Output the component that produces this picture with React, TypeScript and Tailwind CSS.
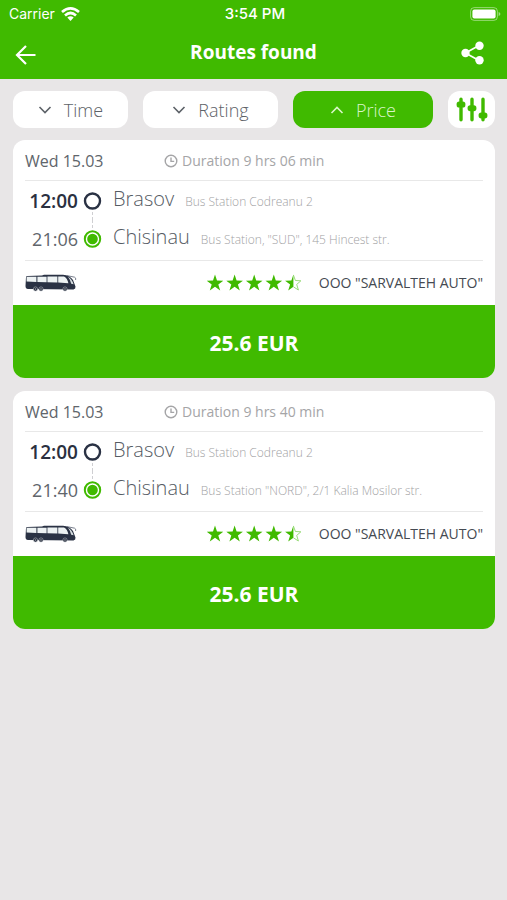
import React from "react";

type Stop = { time: string; city: string; station: string };
type Route = {
  id: number;
  date: string;
  duration: string;
  from: Stop;
  to: Stop;
  carrier: string;
  price: string;
};

const routes: Route[] = [
  {
    id: 1,
    date: "Wed 15.03",
    duration: "Duration 9 hrs 06 min",
    from: { time: "12:00", city: "Brasov", station: "Bus Station Codreanu 2" },
    to: { time: "21:06", city: "Chisinau", station: 'Bus Station, "SUD", 145 Hincest str.' },
    carrier: 'OOO "SARVALTEH AUTO"',
    price: "25.6 EUR",
  },
  {
    id: 2,
    date: "Wed 15.03",
    duration: "Duration 9 hrs 40 min",
    from: { time: "12:00", city: "Brasov", station: "Bus Station Codreanu 2" },
    to: { time: "21:40", city: "Chisinau", station: 'Bus Station "NORD", 2/1 Kalia Mosilor str.' },
    carrier: 'OOO "SARVALTEH AUTO"',
    price: "25.6 EUR",
  },
];

const STAR = "M9 0.6 L11 6.5 L17.3 6.7 L12.3 10.4 L14.2 16.4 L9 12.8 L3.8 16.4 L5.7 10.4 L0.7 6.7 L7 6.5 Z";

function Chevron({ up = false }: { up?: boolean }) {
  return (
    <svg width="14" height="10" viewBox="0 0 14 10" fill="none" stroke="currentColor" strokeWidth="1.6" aria-hidden="true">
      <path d={up ? "M1.5 8 L7 2.5 L12.5 8" : "M1.5 2 L7 7.5 L12.5 2"} />
    </svg>
  );
}

function Stars() {
  return (
    <svg width="97" height="18" viewBox="0 0 97 18" role="img" aria-label="4.5 out of 5">
      {[0, 1, 2, 3].map((i) => (
        <path key={i} d={STAR} fill="#40ba00" transform={`translate(${i * 19.6} 0)`} />
      ))}
      <g transform="translate(78.4 0)">
        <path d="M9 0.6 L7 6.5 L0.7 6.7 L5.7 10.4 L3.8 16.4 L9 12.8 Z" fill="#40ba00" />
        <path d="M9 1 L11 6.5 L16.5 6.8 L12.3 10.4 L14 16 L9 12.8" fill="none" stroke="#8fd86c" strokeWidth="0.9" />
      </g>
    </svg>
  );
}

function Bus() {
  return (
    <svg width="52" height="18" viewBox="0 0 52 18" role="img" aria-label="Bus">
      <path d="M1 3 Q1 2 2.5 2 L17 1.6 L19 0.8 L38 0.8 Q45 1.4 48 6 L50.5 12.5 Q50.8 15 48.5 15.4 L3 15 Q0.5 15 0.5 12 Z" fill="#2a3244" />
      <path d="M1.6 2.8 H11.4 V8 L1.6 7.6 Z M12.4 2.8 H21.6 V8.2 L12.4 8 Z M22.4 2.4 H32.4 V8.4 L22.4 8.2 Z M33.2 2.4 H39 Q42.4 4 43.4 9.2 L33.2 8.6 Z" fill="#edf2f3" />
      <path d="M43 2.8 Q47 5.2 48.6 10.2 L46.2 9.8 Q45.4 6 43 2.8 Z" fill="#d5dcdf" />
      <path d="M42 1.6 L49.6 3.2 Q51.2 3.6 50.6 6" fill="none" stroke="#6a7180" strokeWidth="0.9" />
      {[10.5, 16, 40].map((x) => (
        <g key={x}>
          <circle cx={x} cy="15" r="2.1" fill="#222938" stroke="#c9ccd2" strokeWidth="0.5" />
          <circle cx={x} cy="15" r="0.8" fill="#a3a8b2" />
        </g>
      ))}
    </svg>
  );
}

function StatusBar() {
  return (
    <div className="grid h-7 grid-cols-3 items-center pl-[9px] pr-[6px] font-['Inter','Liberation_Sans',sans-serif] text-sm">
      <div className="flex items-center gap-[6px]">
        <span>Carrier</span>
        <svg width="19" height="14" viewBox="0 0 19 14" aria-hidden="true">
          <g fill="none" stroke="white" strokeWidth="2.7">
            <path d="M1 5 Q9.5 -2.2 18 5" />
            <path d="M4 8.4 Q9.5 3.6 15 8.4" />
          </g>
          <path d="M6.3 10.6 Q9.5 7.8 12.7 10.6 L9.5 13.9 Z" fill="white" />
        </svg>
      </div>
      <span className="text-center text-[15px] font-medium">3:54 PM</span>
      <svg className="justify-self-end" width="31" height="14" viewBox="0 0 31 14" aria-hidden="true">
        <rect x="0.6" y="0.6" width="26.8" height="12.8" rx="3.6" fill="none" stroke="white" strokeOpacity="0.45" />
        <rect x="2.4" y="2.4" width="23.2" height="9.2" rx="2" fill="white" />
        <path d="M28.6 5 Q30.4 5.6 30.4 7 Q30.4 8.4 28.6 9 Z" fill="white" fillOpacity="0.5" />
      </svg>
    </div>
  );
}

function StopRow({ stop, start = false }: { stop: Stop; start?: boolean }) {
  return (
    <li className="flex h-[38px] items-center">
      <span
        className={
          start
            ? "w-[53px] text-right text-[19px] font-semibold text-[#2a3040]"
            : "w-[53px] text-right text-lg text-[#60656b]"
        }
      >
        {stop.time}
      </span>
      <svg className="ml-[5px] shrink-0" width="19" height="38" viewBox="0 0 19 38" aria-hidden="true">
        {start ? (
          <>
            <circle cx="9.5" cy="19" r="7.5" fill="none" stroke="#2a3244" strokeWidth="2.4" />
            <path d="M9.5 30 V38" stroke="#cfcfd2" strokeDasharray="3 2" />
          </>
        ) : (
          <>
            <path d="M9.5 0 V8" stroke="#cfcfd2" strokeDasharray="3 2" />
            <circle cx="9.5" cy="19" r="7.7" fill="none" stroke="#40ba00" strokeWidth="2" />
            <circle cx="9.5" cy="19" r="5.3" fill="#40ba00" />
          </>
        )}
      </svg>
      <span className="mb-1 ml-[11px] text-xl font-light text-[#555b63]">{stop.city}</span>
      <span className="ml-[11px] whitespace-nowrap pt-[2px] text-xs font-light text-[#a2a2a4]">{stop.station}</span>
    </li>
  );
}

function RouteCard({ route }: { route: Route }) {
  return (
    <article className="overflow-hidden rounded-xl bg-white">
      <div className="px-3">
        <div className="flex h-[41px] items-center border-b border-[#e8e8e8] pt-[2px]">
          <span className="w-[139px] text-base text-[#60656b]">{route.date}</span>
          <span className="flex items-center gap-1 text-sm text-[#a5a5a7]">
            <svg width="14" height="14" viewBox="0 0 14 14" fill="none" stroke="currentColor" strokeWidth="1.4" aria-hidden="true">
              <circle cx="7" cy="7" r="5.8" />
              <path d="M7 3.4 V7.4 H10.2" />
            </svg>
            {route.duration}
          </span>
        </div>
        <ul className="border-b border-[#e8e8e8] pb-[2px] pt-[1px]">
          <StopRow stop={route.from} start />
          <StopRow stop={route.to} />
        </ul>
        <div className="flex h-11 items-center">
          <Bus />
          <div className="ml-auto flex items-center gap-4">
            <Stars />
            <span className="text-sm font-medium text-[#454a52]">{route.carrier}</span>
          </div>
        </div>
      </div>
      <button type="button" className="block h-[73px] w-full bg-[#40ba00] pt-1 text-[21px] font-bold text-white">
        {route.price}
      </button>
    </article>
  );
}

export default function App() {
  return (
    <div className="min-h-screen bg-[#e8e6e7] font-['Open_Sans','Noto_Sans',sans-serif]">
      <header className="bg-[#40ba00] text-white">
        <StatusBar />
        <div className="grid h-[51px] grid-cols-[1fr_auto_1fr] items-center px-[15px] pb-[2px]">
          <button type="button" aria-label="Back" className="justify-self-start pt-1">
            <svg width="21" height="20" viewBox="0 0 21 20" fill="none" stroke="white" strokeWidth="2.2" aria-hidden="true">
              <path d="M11 1 L2 10 L11 19 M2 10 H20.5" />
            </svg>
          </button>
          <h1 className="text-[19px] font-bold">Routes found</h1>
          <button type="button" aria-label="Share" className="justify-self-end pr-2">
            <svg width="23" height="24" viewBox="0 0 23 24" fill="white" aria-hidden="true">
              <path d="M18 4.5 L4.5 12 L18 19.5" fill="none" stroke="white" strokeWidth="1.7" />
              <circle cx="18.5" cy="4.8" r="4.2" />
              <circle cx="4.5" cy="12" r="4.2" />
              <circle cx="18.5" cy="19.2" r="4.2" />
            </svg>
          </button>
        </div>
      </header>
      <main className="flex flex-col gap-3 pb-3 pl-[13px] pr-3 pt-3">
        <div className="flex h-[37px] gap-[15px] text-lg font-light text-[#5d6268]">
          <button type="button" className="flex flex-[115] items-center justify-center gap-3 rounded-xl bg-white">
            <Chevron />
            Time
          </button>
          <button type="button" className="flex flex-[135] items-center justify-center gap-3 rounded-xl bg-white">
            <Chevron />
            Rating
          </button>
          <button type="button" aria-pressed="true" className="flex flex-[140] items-center justify-center gap-3 rounded-xl bg-[#40ba00] text-[#d9f6c8]">
            <Chevron up />
            Price
          </button>
          <button type="button" aria-label="Filters" className="flex w-[47px] items-center justify-center rounded-xl bg-white">
            <svg width="32" height="25" viewBox="0 0 32 25" fill="#40ba00" stroke="#40ba00" strokeLinecap="round" aria-hidden="true">
              <path d="M5 2.2 V22.8 M16 2.2 V22.8 M27 2.2 V22.8" strokeWidth="3.4" />
              <g stroke="none">
                <rect x="0.6" y="4.6" width="8.8" height="6" rx="2.6" />
                <rect x="11.6" y="8.2" width="8.8" height="6" rx="2.6" />
                <rect x="22.6" y="15.4" width="8.8" height="6" rx="2.6" />
              </g>
            </svg>
          </button>
        </div>
        <div className="flex flex-col gap-[13px]">
          {routes.map((route) => (
            <RouteCard key={route.id} route={route} />
          ))}
        </div>
      </main>
    </div>
  );
}
